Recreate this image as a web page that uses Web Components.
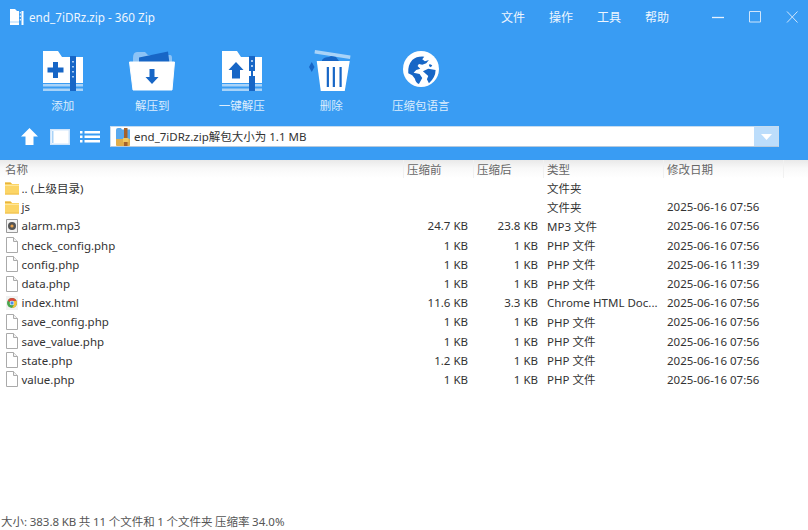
<!DOCTYPE html>
<html lang="zh"><head><meta charset="utf-8"><title>360 Zip</title>
<style>
html,body{margin:0;padding:0;background:#fff}
body{font:11.500px "Noto Sans","Noto Sans CJK SC",sans-serif;color:#333}
</style></head><body>
<zip-app>
  <title-bar slot="head" heading="end_7iDRz.zip - 360 Zip"></title-bar>
  <tool-bar slot="head">
    <tool-button icon="add">添加</tool-button>
    <tool-button icon="extract">解压到</tool-button>
    <tool-button icon="onekey">一键解压</tool-button>
    <tool-button icon="trash">删除</tool-button>
    <tool-button icon="globe">压缩包语言</tool-button>
  </tool-bar>
  <nav-bar slot="head">end_7iDRz.zip解包大小为 1.1 MB</nav-bar>
  <file-table>
    <file-row header name="名称" before="压缩前" after="压缩后" type="类型" date="修改日期"></file-row>
    <file-row icon="folder" name=".. (上级目录)" type="文件夹"></file-row>
    <file-row icon="folder" name="js" type="文件夹" date="2025-06-16 07:56"></file-row>
    <file-row icon="audio" name="alarm.mp3" before="24.7 KB" after="23.8 KB" type="MP3 文件" date="2025-06-16 07:56"></file-row>
    <file-row icon="doc" name="check_config.php" before="1 KB" after="1 KB" type="PHP 文件" date="2025-06-16 07:56"></file-row>
    <file-row icon="doc" name="config.php" before="1 KB" after="1 KB" type="PHP 文件" date="2025-06-16 11:39"></file-row>
    <file-row icon="doc" name="data.php" before="1 KB" after="1 KB" type="PHP 文件" date="2025-06-16 07:56"></file-row>
    <file-row icon="chrome" name="index.html" before="11.6 KB" after="3.3 KB" type="Chrome HTML Doc..." date="2025-06-16 07:56"></file-row>
    <file-row icon="doc" name="save_config.php" before="1 KB" after="1 KB" type="PHP 文件" date="2025-06-16 07:56"></file-row>
    <file-row icon="doc" name="save_value.php" before="1 KB" after="1 KB" type="PHP 文件" date="2025-06-16 07:56"></file-row>
    <file-row icon="doc" name="state.php" before="1.2 KB" after="1 KB" type="PHP 文件" date="2025-06-16 07:56"></file-row>
    <file-row icon="doc" name="value.php" before="1 KB" after="1 KB" type="PHP 文件" date="2025-06-16 07:56"></file-row>
  </file-table>
  <status-bar slot="foot">大小: 383.8 KB 共 11 个文件和 1 个文件夹 压缩率 34.0%</status-bar>
</zip-app>
<script>
const DARK='#1766c6', LIGHT='#a9d3f8';
const ICONS={
 add:`<svg width="50" height="46" viewBox="0 0 50 46"><path d="M5 1h15l4 6h21v26H5z" fill="#fff"/><path d="M5 34h40v2.500H5zM5 38.500h40V41H5z" fill="${LIGHT}"/><rect x="32" y="6" width="6" height="35" fill="${DARK}"/><path d="M34.200 11h1.600v1.600h-1.600zM34.200 16h1.600v1.600h-1.600zM34.200 21h1.600v1.600h-1.600zM34.200 26h1.600v1.600h-1.600z" fill="#cfe4fa"/><path d="M15 12h5v5.500h5.500v5H20V28h-5v-5.500H9.500v-5H15z" fill="${DARK}"/></svg>`,
 extract:`<svg width="50" height="46" viewBox="0 0 50 46"><path d="M6 8q0-6 4-6h8l3 3h22q2 0 2 3v6H6z" fill="#8cc3f6"/><path d="M12 7.500 41 1.500l1.500 12H12z" fill="${DARK}"/><path d="M2.500 12h45L45 40H6z" fill="#fff" stroke="#fff" stroke-linejoin="round"/><path d="M22.500 19h5v8h4l-6.500 7-6.500-7h4z" fill="${DARK}"/></svg>`,
 onekey:`<svg width="50" height="46" viewBox="0 0 50 46"><path d="M5 1h15l4 6h21v26H5z" fill="#fff"/><path d="M5 34h40v2.500H5zM5 38.500h40V41H5z" fill="${LIGHT}"/><path d="M32 6h6v15h-6zM32 26h6v15h-6zM34 21h2v5h-2z" fill="${DARK}"/><path d="M34.200 10h1.600v2h-1.600zM34.200 15h1.600v2h-1.600z" fill="#cfe4fa"/><path d="M19 12l7.500 8H23v8.500h-8V20h-3.500z" fill="${DARK}"/></svg>`,
 trash:`<svg width="50" height="46" viewBox="0 0 50 46"><path d="M9 0 44.500 5.500 44 9 8.500 3.500z" fill="#a9d3f8"/><path d="M16 10q2-3 7-3l2-1 5 1 3 4H16z" fill="${DARK}"/><path d="M5.750 12 8.500 17 5.750 22 3 17z" fill="${DARK}"/><path d="M10.750 11h33l-5 30h-24z" fill="#fff"/><path d="M20.750 17h2.200v20h-2.200zM26.750 17h2.200v20h-2.200zM33.500 17h2.200v20h-2.200z" fill="${DARK}"/></svg>`,
 globe:`<svg width="50" height="46" viewBox="0 0 50 46"><circle cx="25" cy="19" r="18" fill="#fff"/><g transform="translate(4.250 -2) scale(.3333)" fill="${DARK}"><path d="M36 36Q50 24 72 26L66 34 74 40 86 36 78 46 66 50 56 48 52 54 60 62 48 66 40 74 58 78 66 90 56 108Q46 104 44 92L36 82 24 76Q22 52 36 36z"/><path d="M68 70 84 62 106 66Q106 88 86 106L80 94 84 84z"/><path d="M88 48 96 52 92 58 86 54z"/></g></svg>`,
 folder:`<svg width="16" height="16" viewBox="0 0 16 16"><path d="M1 2.500h5.500L8 4h7v10.500H1z" fill="#fcd566"/><path d="M1 2.500h5.500L8 4H1z" fill="#e8b43a"/><path d="M1 5h14v1H1z" fill="#ffe79c"/><path d="M1 13.500h14v1H1z" fill="#eebf4c"/></svg>`,
 doc:`<svg width="16" height="18" viewBox="0 0 16 18"><path d="M2.500 1.500h7l4 4v11h-11z" fill="#fff" stroke="#aaa"/><path d="M9.500 1.500v4h4" fill="#f2f2f2" stroke="#aaa"/></svg>`,
 audio:`<svg width="16" height="16" viewBox="0 0 16 16"><path d="M2.500 1.500h11v13h-11z" fill="#f4f4f4" stroke="#999"/><circle cx="8" cy="8" r="4" fill="#555"/><circle cx="8" cy="8" r="1.600" fill="#e9a34c"/></svg>`,
 chrome:`<svg width="16" height="16" viewBox="0 0 16 16"><path d="M2 1h12v14H2z" fill="#f1f1f1"/><circle cx="8" cy="8" r="5" fill="#4aa54e"/><path d="M8 3a5 5 0 0 1 4.600 3H8a2 2 0 0 0-2 1.200L3.800 5.400A5 5 0 0 1 8 3z" fill="#d9483b"/><path d="M12.600 6A5 5 0 0 1 8 13l2-3.500V6z" fill="#f3c13a"/><circle cx="8" cy="8" r="2.300" fill="#fff"/><circle cx="8" cy="8" r="1.700" fill="#4a8ee8"/></svg>`
};
function def(name,html,init){
  customElements.define(name,class extends HTMLElement{
    constructor(){super();this.attachShadow({mode:'open'}).innerHTML=html;}
    connectedCallback(){init&&init(this,this.shadowRoot);}
  });
}
def('zip-app',`<style>
:host{display:flex;flex-direction:column;width:808px;height:530px;background:#fff;overflow:hidden}
header{background:#399cf3;height:160px;flex:none;display:flex;flex-direction:column}
main{flex:1;min-height:0}
</style><header><slot name="head"></slot></header><main><slot></slot></main><slot name="foot"></slot>`);
def('title-bar',`<style>
:host{display:flex;align-items:center;height:34px;padding-left:10px;color:#fff;flex:none}
svg{flex:none;display:block}
.t{margin-left:4px;font-size:11.700px;color:#eef6fe}
nav{margin-left:auto;display:flex;gap:24px;margin-right:43px;color:#eef6fe;font-size:12px}
.win{display:flex;gap:25px;margin-right:10px}
</style>
<svg width="15" height="16" viewBox="0 0 15 16"><path d="M0 0h5l2 2h6.500v14H0z" fill="#fff"/><path d="M9 1h2.500v15H9z" fill="#399cf3"/><path d="M9.800 3h1v1.500h-1zM9.800 6.500h1V8h-1zM9.800 10h1v1.500h-1z" fill="#fff"/><path d="M0 12.500h9V13.500H0z" fill="#a9d3f8"/></svg>
<span class="t"></span>
<nav><span>文件</span><span>操作</span><span>工具</span><span>帮助</span></nav>
<div class="win">
<svg width="12" height="12" viewBox="0 0 12 12"><path d="M0 6.500h12" stroke="#e6f2fe" stroke-width="1.300"/></svg>
<svg width="12" height="12" viewBox="0 0 12 12"><path d="M.5.500h11v10.500H.5z" fill="none" stroke="#cfe5fb"/></svg>
<svg width="12" height="12" viewBox="0 0 12 12"><path d="M1 .500l10.500 11M11.500 .500 1 11.500" stroke="#cfe5fb" fill="none"/></svg>
</div>`,(e,s)=>{s.querySelector('.t').textContent=e.getAttribute('heading');});
def('tool-bar',`<style>:host{display:flex;height:90px;padding-left:18px;flex:none}</style><slot></slot>`);
def('tool-button',`<style>
:host{display:flex;flex-direction:column;align-items:center;width:89.500px;color:#dcedfd;font-size:11.500px}
.i{height:46px;margin-top:16px;margin-bottom:1px}
svg{display:block}
</style><div class="i"></div><slot></slot>`,(e,s)=>{s.querySelector('.i').innerHTML=ICONS[e.getAttribute('icon')];});
def('nav-bar',`<style>
:host{display:flex;align-items:center;height:21px;margin-top:2px;padding-left:21px;flex:none}
.up,.win,.list{display:block;flex:none}
.win{margin-left:12px}.list{margin-left:10px}
.box{margin-left:10px;width:669px;height:21px;box-sizing:border-box;background:#fff;border:1px solid #c6dcf0;border-bottom-color:#b5c9dd;display:flex;align-items:center}
.zip{margin-left:4px;flex:none}
.txt{margin-left:3px;flex:1;color:#333;white-space:nowrap;padding-bottom:1px}
.drop{width:24px;height:100%;background:#bcddfb;display:flex;align-items:center;justify-content:center;flex:none}
</style>
<svg class="up" width="17" height="17" viewBox="0 0 17 17"><path d="M8.500 0 17 8.500h-4.500V17h-8V8.500H0z" fill="#fff"/></svg>
<svg class="win" width="20" height="16" viewBox="0 0 20 16"><rect x=".75" y=".75" width="18.500" height="14.500" fill="#fff" stroke="#cfe5fb" stroke-width="1.500"/><rect x="2" y="2" width="1.500" height="12" fill="#a9d3f8"/></svg>
<svg class="list" width="20" height="13" viewBox="0 0 20 13"><path d="M0 1h2.500v2.500H0zM0 5.500h2.500V8H0zM0 10h2.500v2.500H0zM4.500 1H20v2.500H4.500zM4.500 5.500H20V8H4.500zM4.500 10H20v2.500H4.500z" fill="#fff"/></svg>
<div class="box">
<svg class="zip" width="16" height="18" viewBox="0 0 16 18"><path d="M1 2q0-2 2-2h3l1 1.500h8V12H1z" fill="#58a9ee"/><path d="M1 11h14v6q0 1-1 1H2q-1 0-1-1z" fill="#e0ad4a"/><path d="M9 0h3.500v18H9z" fill="#a5622c"/><path d="M8 10h5.500v4H8z" fill="#f0c860"/></svg>
<span class="txt"><slot></slot></span>
<div class="drop"><svg width="11" height="6" viewBox="0 0 11 6"><path d="M0 0h11L5.500 6z" fill="#fff"/></svg></div>
</div>`);
def('file-table',`<style>:host{display:block}</style><slot></slot>`);
def('file-row',`<style>
:host{display:grid;grid-template-columns:404px 70px 70px 120px 120px;height:19.200px;align-items:center;white-space:nowrap;color:#333}
:host([header]){height:18px;color:#666;background:linear-gradient(#e9e9e9,#f8f8f8 45%,#fff)}
:host([header]) .c{border-right:1px solid #f1f1f1;box-sizing:border-box;height:100%;display:flex;align-items:center;text-align:left;justify-content:flex-start;padding:0 0 0 3px}
:host([header]) .n{padding-left:5px}
.c{padding-left:3px;overflow:hidden}
.n{display:flex;align-items:center;padding-left:4px}
.i{width:16px;height:18px;display:flex;align-items:center;justify-content:center;margin-right:1.500px;flex:none}
.r{text-align:right;padding:0 6px 0 0}
</style><div class="c n"><span class="i"></span><span class="name"></span></div><div class="c r b"></div><div class="c r a"></div><div class="c t"></div><div class="c d"></div>`,(e,s)=>{
  const g=a=>e.getAttribute(a)||'';
  s.querySelector('.name').textContent=g('name');
  s.querySelector('.b').textContent=g('before');
  s.querySelector('.a').textContent=g('after');
  s.querySelector('.t').textContent=g('type');
  s.querySelector('.d').textContent=g('date');
  const i=s.querySelector('.i');
  if(e.hasAttribute('header')) i.remove(); else i.innerHTML=ICONS[g('icon')];
});
def('status-bar',`<style>:host{display:block;height:17px;line-height:17px;padding-left:1px;color:#555;flex:none;word-spacing:-.4px}</style><slot></slot>`);
</script></body></html>
